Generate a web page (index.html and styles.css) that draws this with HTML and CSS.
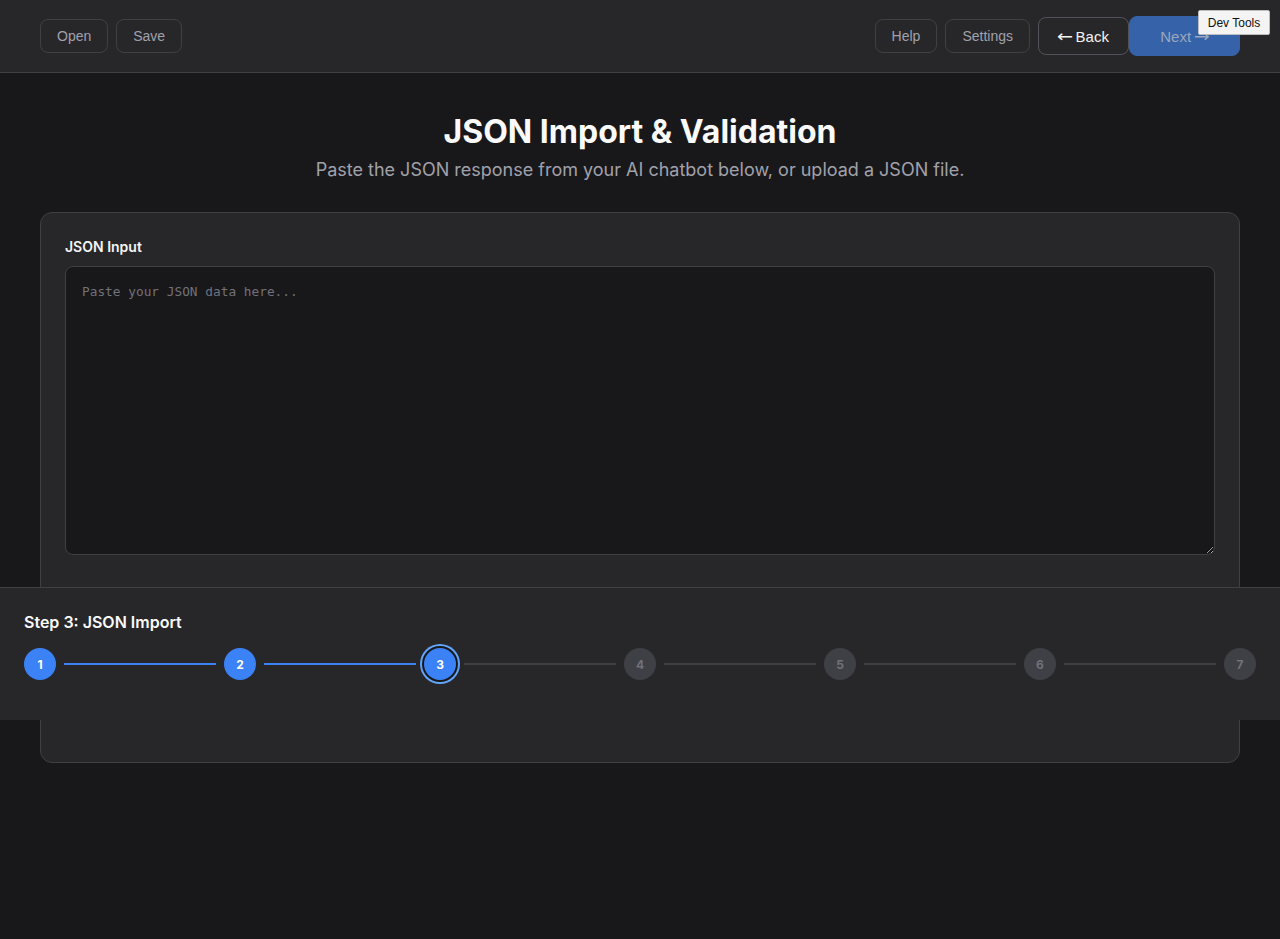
FILE: index.html
```html
<!DOCTYPE html>
<html lang="en">
<head>
<meta charset="utf-8">
<title>JSON Import</title>
<link rel="stylesheet" href="styles.css">
</head>
<body>
<header class="topbar">
  <div class="group">
    <button class="btn">Open</button>
    <button class="btn">Save</button>
  </div>
  <div class="group">
    <button class="btn">Help</button>
    <button class="btn">Settings</button>
    <div class="nav">
      <button class="btn back"><span class="arrow">←</span> Back</button>
      <button class="btn next">Next <span class="arrow">→</span></button>
    </div>
  </div>
</header>
<div class="devtools">Dev Tools</div>
<main class="main">
  <h1 class="title">JSON Import &amp; Validation</h1>
  <p class="subtitle">Paste the JSON response from your AI chatbot below, or upload a JSON file.</p>
  <section class="card">
    <label class="label">JSON Input</label>
    <textarea class="input" placeholder="Paste your JSON data here..."></textarea>
    <div class="spacer"></div>
  </section>
</main>
<div class="stepbar">
  <div class="step-title">Step 3: JSON Import</div>
  <div class="steps">
    <span class="dot done">1</span><span class="line done"></span>
    <span class="dot done">2</span><span class="line done"></span>
    <span class="dot current">3</span><span class="line"></span>
    <span class="dot">4</span><span class="line"></span>
    <span class="dot">5</span><span class="line"></span>
    <span class="dot">6</span><span class="line"></span>
    <span class="dot">7</span>
  </div>
</div>
</body>
</html>
```
FILE: styles.css
```css
* { box-sizing: border-box; }
html, body { margin: 0; padding: 0; }
body {
  background: #18181b;
  color: #fafafa;
  font-family: Inter, "Liberation Sans", sans-serif;
  min-height: 939px;
  position: relative;
}
.topbar {
  height: 73px;
  background: #27272a;
  border-bottom: 1px solid #3f3f46;
  display: flex;
  align-items: center;
  justify-content: space-between;
  padding: 0 40px;
}
.group { display: flex; align-items: center; gap: 8px; }
.nav { display: flex; align-items: center; }
.btn {
  font-family: "Liberation Sans", Arial, sans-serif;
  font-size: 14px;
  color: #a1a1aa;
  background: transparent;
  border: 1px solid #3f3f46;
  border-radius: 8px;
  height: 34px;
  padding: 0 16px;
  white-space: nowrap;
}
.arrow {
  font-family: "DejaVu Sans", sans-serif;
  font-size: 16px;
  display: inline-block;
  transform: scaleX(1.2);
}
.btn.back {
  height: 38px;
  color: #f4f4f5;
  border-color: #52525b;
  font-size: 15px;
  padding: 0;
  width: 91px;
}
.btn.next {
  height: 40px;
  width: 111px;
  padding: 0;
  background: #3562a8;
  border-color: #3562a8;
  color: #9aa7bd;
  font-size: 15px;
}
.devtools {
  position: absolute;
  top: 10px;
  left: 1198px;
  width: 72px;
  height: 25px;
  background: #f4f4f4;
  border: 1px solid #bdbdbd;
  color: #111;
  font-family: "Liberation Sans", Arial, sans-serif;
  font-size: 12px;
  display: flex;
  align-items: center;
  justify-content: center;
  border-radius: 2px;
}
.main { padding: 39px 40px 0; }
.title {
  margin: 0;
  text-align: center;
  font-size: 32px;
  line-height: 40px;
  font-weight: 700;
  color: #fafafa;
}
.subtitle {
  margin: 4px 0 0;
  text-align: center;
  font-size: 18px;
  line-height: 28px;
  color: #a1a1aa;
}
.card {
  margin-top: 28px;
  background: #27272a;
  border: 1px solid #3f3f46;
  border-radius: 12px;
  padding: 24px;
  display: flex;
  flex-direction: column;
}
.label {
  font-size: 14px;
  line-height: 20px;
  font-weight: 600;
  color: #f4f4f5;
  margin-bottom: 9px;
}
.input {
  height: 289px;
  background: #18181b;
  border: 1px solid #3f3f46;
  border-radius: 8px;
  padding: 16px;
  font-family: "DejaVu Sans Mono", "Liberation Mono", monospace;
  font-size: 12.8px;
  line-height: 18px;
  color: #e4e4e7;
  resize: vertical;
  outline: none;
}
.input::placeholder { color: #71717a; }
.spacer { height: 183px; }
.stepbar {
  position: absolute;
  top: 587px;
  left: 0;
  right: 0;
  height: 133px;
  background: #27272a;
  border-top: 1px solid #3f3f46;
  padding: 22px 24px 0;
}
.step-title {
  font-size: 16px;
  line-height: 24px;
  font-weight: 600;
  color: #fafafa;
}
.steps {
  margin-top: 14px;
  display: flex;
  align-items: center;
  gap: 8px;
}
.dot {
  width: 32px;
  height: 32px;
  border-radius: 50%;
  background: #3f3f46;
  color: #71717a;
  font-size: 12px;
  font-weight: 700;
  display: flex;
  align-items: center;
  justify-content: center;
  flex: none;
}
.dot.done, .dot.current { background: #3b82f6; color: #fff; }
.dot.current { box-shadow: 0 0 0 2px #18181b, 0 0 0 4px #60a5fa; }
.line { flex: 1; height: 2px; background: #3f3f46; }
.line.done { background: #3b82f6; }
```
